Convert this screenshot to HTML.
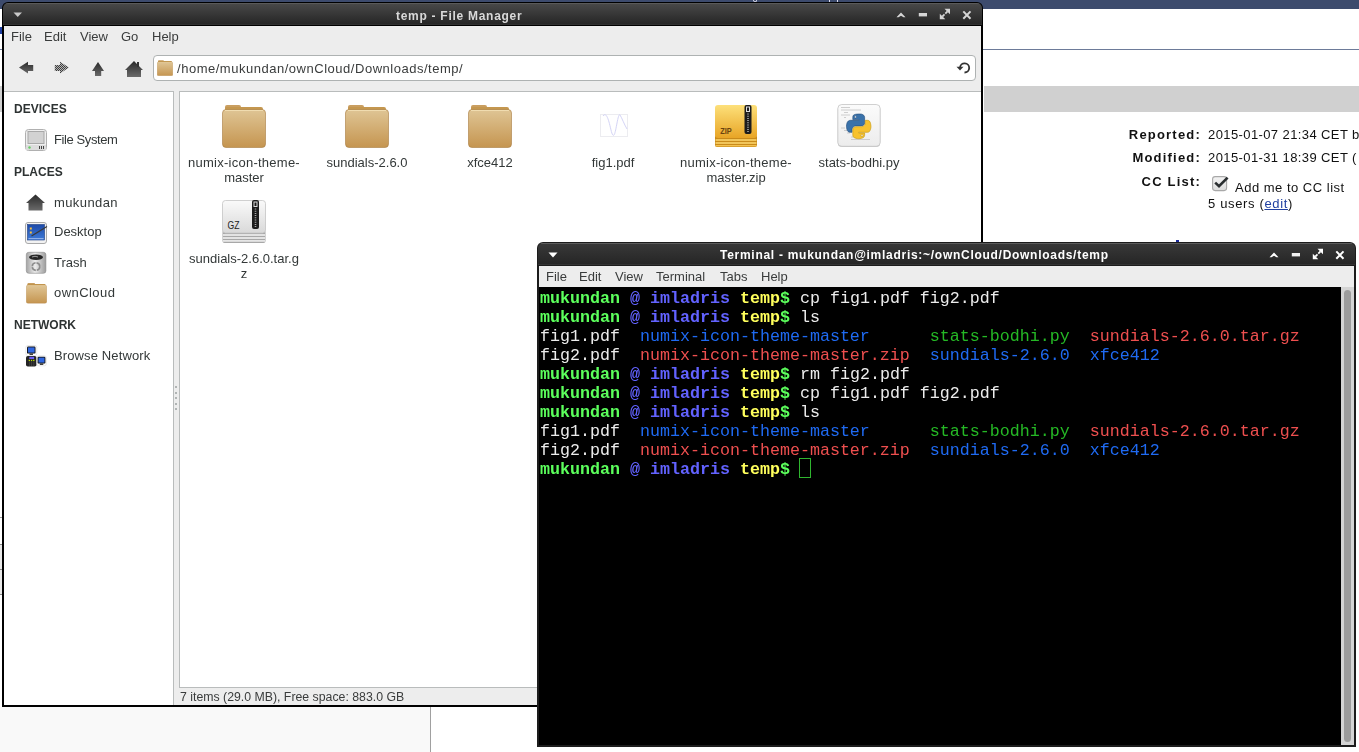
<!DOCTYPE html>
<html><head><meta charset="utf-8">
<style>
*{margin:0;padding:0;box-sizing:border-box}
html,body{width:1359px;height:752px;overflow:hidden;background:#fff;font-family:"Liberation Sans",sans-serif;position:relative}
.a{position:absolute}
.mono{font-family:"Liberation Mono",monospace}
svg.a{overflow:visible}
#topstrip{left:0;top:0;width:1359px;height:9px;background:#3d4b6d}
.bz{font-size:13px;color:#111;white-space:nowrap}
.bzb{font-weight:bold;text-align:right}
/* file manager */
#fm{left:2px;top:2px;width:981px;height:705px;background:#000;border-radius:6px 6px 0 0}
#fmtitle{left:3px;top:3px;width:979px;height:22px;border-radius:5px 5px 0 0;background:linear-gradient(#5a5a5a 0,#5a5a5a 1px,#484848 1px,#262626 21px,#303030 21px)}
.ttl{color:#d9d9d9;font-weight:bold;font-size:12px;white-space:nowrap;letter-spacing:0.72px}
#fmbody{left:4px;top:26px;width:977px;height:679px;background:#ededed}
.menu{font-size:13px;color:#3a3c3c;white-space:nowrap;line-height:15px}
#loc{left:153px;top:55px;width:823px;height:26px;background:#fff;border:1px solid #aeb2b2;border-radius:4px}
#side{left:4px;top:91px;width:170px;height:614px;background:#fff;border-top:1px solid #b9bcbc;border-right:1px solid #b9bcbc}
#view{left:179px;top:91px;width:802px;height:597px;background:#fff;border-top:1px solid #b9bcbc;border-left:1px solid #b9bcbc;border-bottom:1px solid #b9bcbc}
.hd{font-weight:bold;font-size:12px;color:#2e3333;line-height:14px}
.si{font-size:13px;color:#333838;white-space:nowrap;line-height:15px}
.lbl{font-size:13px;color:#333838;text-align:center;line-height:15px;width:130px;white-space:nowrap}
/* terminal */
#term{left:537px;top:242px;width:819px;height:505px;background:#1c1c1c;border-radius:6px 6px 0 0}
#ttitle{left:538px;top:243px;width:817px;height:22px;border-radius:5px 5px 0 0;background:linear-gradient(#5c5c5c 0,#5c5c5c 1px,#383838 1px,#262626 21px,#333 21px)}
#tmenu{left:539px;top:266px;width:815px;height:21px;background:#ededed}
#tscreen{left:539px;top:287px;width:802px;height:458px;background:#000}
#tsb{left:1341px;top:287px;width:13px;height:458px;background:#d4d4d4}
.tl{font-size:16.67px;line-height:19px;white-space:pre;color:#ececec}
.g{color:#5cff5c;font-weight:bold}
.b{color:#6262ff;font-weight:bold}
.y{color:#ffff5c;font-weight:bold}
.db{color:#1f6af2}
.dr{color:#ee4f4f}
.dg{color:#25b825}
.menu,.si,.hd,.lbl,.ttl,.tl,.bz{will-change:transform}
</style></head><body>
<svg width="0" height="0" style="position:absolute">
<defs>
<linearGradient id="fold" x1="0" y1="0" x2="0" y2="1"><stop offset="0" stop-color="#dfc595"/><stop offset="1" stop-color="#c59550"/></linearGradient>
<linearGradient id="zipg" x1="0" y1="0" x2="0" y2="1"><stop offset="0" stop-color="#fde07a"/><stop offset="1" stop-color="#e8a526"/></linearGradient>
<linearGradient id="gzg" x1="0" y1="0" x2="0" y2="1"><stop offset="0" stop-color="#fafafa"/><stop offset="1" stop-color="#d9d9d9"/></linearGradient>
<pattern id="dith" width="2" height="2" patternUnits="userSpaceOnUse"><rect width="2" height="2" fill="#b4b4b4"/><rect width="1" height="1" fill="#3a3a3a"/><rect x="1" y="1" width="1" height="1" fill="#444"/></pattern>
<linearGradient id="tb" x1="0" y1="0" x2="0" y2="1"><stop offset="0" stop-color="#2a2a2a"/><stop offset="1" stop-color="#6a6a6a"/></linearGradient>
<symbol id="folder" viewBox="0 0 44 44">
  <rect x="3" y="1" width="16" height="6" rx="2" fill="#c99e60"/>
  <rect x="3" y="3" width="38" height="8" rx="2" fill="#c4974f"/>
  <rect x="0.5" y="5.5" width="43" height="38" rx="3.5" fill="url(#fold)" stroke="#a97b3f" stroke-width="1" stroke-opacity="0.6"/>
  <line x1="3" y1="6.5" x2="41" y2="6.5" stroke="#f0dcb0" stroke-width="1"/>
</symbol>
</defs>
</svg>

<div class="a" id="topstrip"></div>
<div class="a" style="left:753px;top:0;width:4px;height:2px;border:1px solid #dde;border-top:none;border-radius:0 0 2px 2px"></div>
<div class="a" style="left:829px;top:0;width:1px;height:2px;background:#dde"></div>
<div class="a" style="left:837px;top:0;width:1px;height:2px;background:#dde"></div>
<div class="a" style="left:983px;top:49px;width:376px;height:1px;background:#6d7b99"></div>
<div class="a" style="left:984px;top:86px;width:375px;height:26px;background:#d0d0d0"></div>
<div class="a" style="left:0;top:49px;width:2px;height:1px;background:#6d7b99"></div>
<div class="a" style="left:0;top:27px;width:2px;height:7px;background:#1f3ea0"></div>
<div class="a" style="left:0;top:86px;width:2px;height:26px;background:#d0d0d0"></div>
<div class="a" style="left:0;top:517px;width:2px;height:1px;background:#999"></div>
<div class="a" style="left:0;top:544px;width:2px;height:51px;background:#e8e8e8;border-top:1px solid #888;border-bottom:1px solid #888"></div>
<div class="a" style="left:0;top:569px;width:2px;height:1px;background:#888"></div>
<div class="a" style="left:1176px;top:240px;width:3px;height:2px;background:#1a2a9a"></div>
<div class="a" style="left:0;top:707px;width:430px;height:45px;background:#f9f9f9"></div>
<div class="a" style="left:430px;top:707px;width:1px;height:45px;background:#a0a0a0"></div>
<div class="a bz bzb" style="left:1060px;top:127px;width:141px;letter-spacing:1.2px">Reported:</div>
<div class="a bz bzb" style="left:1060px;top:150px;width:141px;letter-spacing:1.2px">Modified:</div>
<div class="a bz bzb" style="left:1060px;top:174px;width:141px;letter-spacing:1.2px">CC List:</div>
<div class="a bz" style="left:1208px;top:127px;letter-spacing:0.4px">2015-01-07 21:34 CET by</div>
<div class="a bz" style="left:1208px;top:150px;letter-spacing:0.4px">2015-01-31 18:39 CET (</div>
<svg class="a" style="left:1212px;top:176px" width="18" height="16"><defs><linearGradient id="cbg" x1="0" y1="0" x2="0" y2="1"><stop offset="0" stop-color="#f4f4f4"/><stop offset="1" stop-color="#dcdcdc"/></linearGradient></defs><rect x="0.6" y="0.6" width="14" height="14" rx="2.5" fill="url(#cbg)" stroke="#a8a8a8" stroke-width="1.1"/><path d="M3.2 6.6 L7 10.2 L15.6 1.6" fill="none" stroke="#2a2e30" stroke-width="2.6" stroke-linejoin="miter"/></svg>
<div class="a bz" style="left:1235px;top:180px;letter-spacing:0.5px">Add me to CC list</div>
<div class="a bz" style="left:1208px;top:196px;letter-spacing:0.65px">5 users (<span style="color:#1f3fa0;text-decoration:underline">edit</span>)</div>

<!-- File manager -->
<div class="a" id="fm"></div>
<div class="a" id="fmtitle"></div>
<svg class="a" style="left:13px;top:12px" width="10" height="6"><path d="M0.5 0.5 H9 L4.75 5 Z" fill="#c9c9c9"/></svg>
<div class="a ttl" style="left:396px;top:9px">temp - File Manager</div>
<svg class="a" style="left:895px;top:8px" width="80" height="14">
  <path d="M1.5 9.2 L6 4.6 L10.5 9.2 H8.5 L6 7.8 L3.5 9.2 Z" fill="#d6d6d6"/>
  <rect x="23.8" y="5" width="8.2" height="3.4" fill="#d6d6d6"/>
  <path d="M49.5 0.7 H55 V6.2 Z M44.8 11.2 V5.7 L50.3 11.2 Z" fill="#d6d6d6"/>
  <path d="M52.5 3.4 L50.3 5.6 M47.3 8.6 L49.5 6.4" stroke="#d6d6d6" stroke-width="1.8"/>
  <path d="M68.3 3.4 L75.5 10.8 M75.5 3.4 L68.3 10.8" stroke="#d6d6d6" stroke-width="2"/>
</svg>
<div class="a" id="fmbody"></div>
<div class="a menu" style="left:11px;top:29px">File</div>
<div class="a menu" style="left:44px;top:29px">Edit</div>
<div class="a menu" style="left:80px;top:29px">View</div>
<div class="a menu" style="left:121px;top:29px">Go</div>
<div class="a menu" style="left:152px;top:29px">Help</div>
<!-- toolbar icons -->
<svg class="a" style="left:0;top:0" width="160" height="90">
  <path d="M19 67.6 L28 61.8 V65 H33.2 V71 H28 V73.6 Z" fill="url(#tb)"/>
  <path d="M69 67.6 L60 61.8 V65 H54.8 V71 H60 V73.6 Z" fill="url(#dith)"/>
  <path d="M98 62 L104 71 H101.2 V76 H95 V71 H92 Z" fill="url(#tb)"/>
  <path d="M134 61 L143 70 H141 V77 H127 V70 H125 Z" fill="url(#tb)"/>
  <rect x="137" y="62" width="2" height="5" fill="#333"/>
</svg>
<div class="a" id="loc"></div>
<svg class="a" style="left:157px;top:60px" width="16" height="16"><use href="#folder" width="16" height="16"/></svg>
<div class="a menu" style="left:177px;top:61px;letter-spacing:0.52px">/home/mukundan/ownCloud/Downloads/temp/</div>
<svg class="a" style="left:955px;top:59.6px" width="16" height="16">
  <path d="M5 7.5 A4.6 4.6 0 1 1 9.5 12.5" fill="none" stroke="#333" stroke-width="1.8"/>
  <path d="M1.5 6.8 L8.5 6.8 L5 10.5 Z" fill="#333"/>
</svg>
<div class="a" id="side"></div>
<div class="a" id="view"></div>
<div class="a" style="left:175px;top:386px;width:2px;height:26px;background:repeating-linear-gradient(#b0b4b4 0 2px,transparent 2px 5.5px)"></div>
<div class="a hd" style="left:14px;top:102px">DEVICES</div>
<svg class="a" style="left:25px;top:129px" width="22" height="22">
  <rect x="0.5" y="0.5" width="21" height="21" rx="3" fill="#efefef" stroke="#b0b0b0"/>
  <rect x="3" y="2.5" width="16" height="12" fill="#d2d2d2" stroke="#a8a8a8"/>
  <rect x="1" y="16" width="20" height="5" fill="#dcdcdc"/>
  <circle cx="4.5" cy="18.5" r="1.2" fill="#6c6"/>
  <rect x="14" y="17" width="1" height="3" fill="#444"/><rect x="16" y="17" width="1" height="3" fill="#444"/><rect x="18" y="17" width="1" height="3" fill="#444"/>
</svg>
<div class="a si" style="left:54px;top:132px;letter-spacing:-0.4px">File System</div>
<div class="a hd" style="left:14px;top:165px">PLACES</div>
<svg class="a" style="left:26px;top:194px" width="20" height="17">
  <path d="M9.5 0.5 L19 9 H16.5 V16.5 H2.5 V9 H0 Z" fill="url(#tb)"/>
</svg>
<div class="a si" style="left:54px;top:195px;letter-spacing:0.4px">mukundan</div>
<svg class="a" style="left:25px;top:222px" width="22" height="22">
  <defs><linearGradient id="dsk" x1="0" y1="0" x2="0" y2="1"><stop offset="0" stop-color="#1d4aa8"/><stop offset="1" stop-color="#3d7ad8"/></linearGradient></defs>
  <rect x="0.5" y="0.5" width="21" height="21" rx="2.5" fill="#f2f2f2" stroke="#a9a9a9"/>
  <rect x="2.5" y="2.5" width="17" height="15.5" fill="url(#dsk)" stroke="#1a3b80" stroke-width="0.6"/>
  <rect x="3.5" y="16" width="15" height="1.2" fill="#8fb0e8"/>
  <rect x="4.8" y="5.5" width="2" height="2" fill="#f6c040"/><rect x="4.8" y="9.5" width="2" height="2" fill="#f6c040"/>
  <path d="M6.5 14 L22 4.5" stroke="#3a3a3a" stroke-width="1.3"/>
</svg>
<div class="a si" style="left:54px;top:224px">Desktop</div>
<svg class="a" style="left:26px;top:252px" width="21" height="22">
  <defs><linearGradient id="trg" x1="0" y1="0" x2="1" y2="0"><stop offset="0" stop-color="#a4a4a4"/><stop offset="0.45" stop-color="#ececec"/><stop offset="1" stop-color="#9c9c9c"/></linearGradient></defs>
  <rect x="0.3" y="0.3" width="19.6" height="21" rx="2.5" fill="url(#trg)" stroke="#8a8a8a" stroke-width="0.6"/>
  <ellipse cx="10" cy="5.3" rx="7" ry="2.8" fill="#262626"/>
  <path d="M6 5 Q9 3.5 12 5" stroke="#bbb" stroke-width="0.8" fill="none"/>
  <circle cx="10" cy="14.6" r="3.8" fill="none" stroke="#8c8c8c" stroke-width="1.6" stroke-dasharray="5 1"/>
</svg>
<div class="a si" style="left:54px;top:255px">Trash</div>
<svg class="a" style="left:26px;top:282px" width="21" height="22"><use href="#folder" width="21" height="22"/></svg>
<div class="a si" style="left:54px;top:285px;letter-spacing:0.45px">ownCloud</div>
<div class="a hd" style="left:14px;top:318px">NETWORK</div>
<svg class="a" style="left:25px;top:345px" width="22" height="22">
  <rect x="0.8" y="0.5" width="11" height="10" rx="2" fill="#fff" stroke="#d8d8d8" stroke-width="0.6"/>
  <rect x="2" y="1.6" width="8.5" height="7" rx="1.2" fill="#111"/>
  <rect x="2.9" y="2.4" width="6.7" height="5.2" fill="#2f66e0"/>
  <rect x="4.5" y="8.6" width="3.5" height="1.2" fill="#111"/>
  <rect x="1" y="11" width="10.5" height="10.5" rx="1.8" fill="#242424"/>
  <rect x="4.3" y="11.8" width="4.8" height="2.2" fill="#6a5cf4"/>
  <rect x="3.7" y="14.8" width="1.3" height="1.3" fill="#bde000"/><rect x="5.9" y="14.8" width="1.3" height="1.3" fill="#bde000"/><rect x="8.1" y="14.8" width="1.3" height="1.3" fill="#bde000"/>
  <path d="M4.4 16.5 V21 M6.6 16.5 V21 M8.8 16.5 V21" stroke="#444" stroke-width="0.8"/>
  <rect x="11.8" y="10.8" width="9.5" height="10" rx="2" fill="#fff" stroke="#d8d8d8" stroke-width="0.6"/>
  <rect x="12.6" y="11.8" width="7.8" height="6.8" rx="1.2" fill="#111"/>
  <rect x="13.5" y="12.6" width="6" height="5" fill="#2f66e0"/>
  <rect x="14.8" y="18.6" width="3.5" height="1.2" fill="#111"/>
</svg>
<div class="a si" style="left:54px;top:348px;letter-spacing:0.12px">Browse Network</div>
<div class="a menu" style="left:180px;top:690px;font-size:12.3px">7 items (29.0 MB), Free space: 883.0 GB</div>

<!-- icons -->
<svg class="a" style="left:222px;top:104px" width="44" height="44"><use href="#folder" width="44" height="44"/></svg>
<svg class="a" style="left:345px;top:104px" width="44" height="44"><use href="#folder" width="44" height="44"/></svg>
<svg class="a" style="left:468px;top:104px" width="44" height="44"><use href="#folder" width="44" height="44"/></svg>
<svg class="a" style="left:600px;top:114px" width="28" height="23">
  <rect x="0.5" y="0.5" width="27" height="22" fill="#fff" stroke="#ececf0"/>
  <path d="M3 2 C5 -1 7 1 9 8 S12 23 14 21 S18 -2 20 1 S24 10 27 15" fill="none" stroke="#d4d4f6" stroke-width="1"/>
</svg>
<svg class="a" style="left:715px;top:105px" width="43" height="43">
  <rect x="0" y="30" width="42" height="12" rx="2" fill="#c98a1a"/>
  <rect x="0.5" y="34.2" width="41" height="1.6" fill="#fbd46a"/>
  <rect x="0.5" y="37.2" width="41" height="1.6" fill="#fbd46a"/>
  <rect x="0.5" y="40" width="41" height="1.4" fill="#f4c250"/>
  <rect x="0" y="0" width="42" height="33" rx="3" fill="url(#zipg)"/>
  <rect x="29.5" y="0" width="7" height="29" rx="2" fill="#1c1c1c"/>
  <rect x="31.5" y="2" width="3" height="4.5" fill="none" stroke="#ddd" stroke-width="1"/>
  <path d="M33 8.5 V27" stroke="#aaa" stroke-width="1.6" stroke-dasharray="1 1.2"/>
  <text x="5.2" y="28.7" font-family="Liberation Sans" font-size="9.6" font-weight="bold" fill="#6a4310" textLength="11.5" lengthAdjust="spacingAndGlyphs">ZIP</text>
</svg>
<svg class="a" style="left:837px;top:104px" width="44" height="44">
  <defs><linearGradient id="pyb" x1="0" y1="0" x2="0" y2="1"><stop offset="0" stop-color="#fbfbfb"/><stop offset="1" stop-color="#ececec"/></linearGradient></defs>
  <rect x="0.8" y="1" width="42.4" height="42" rx="4" fill="#9a9a9a" opacity="0.5"/>
  <rect x="0.8" y="0.5" width="42.4" height="41.8" rx="4" fill="url(#pyb)" stroke="#c4c4c4" stroke-width="0.8"/>
  <g stroke="#c8c8c8" stroke-width="0.9">
    <path d="M4 3.5 H13 M4 6 H24 M7 8.5 H11 M4 11 H13 M7 13.5 H9 M4 24 H8 M7 26.5 H10 M10 29 H13 M14 33 H27 M14 35.5 H33"/>
  </g>
  <g transform="translate(9.5,10) scale(0.22)">
    <path d="M54.9 0.1c-4.6 0-9 .4-12.8 1.1-11.3 2-13.4 6.2-13.4 13.9v10.2h26.8v3.4H18.6c-7.8 0-14.6 4.7-16.7 13.6-2.5 10.2-2.6 16.6 0 27.2 1.9 7.9 6.4 13.6 14.2 13.6h9.2V70.8c0-8.9 7.7-16.7 16.8-16.7h26.8c7.5 0 13.4-6.1 13.4-13.6V15.1c0-7.2-6.1-12.7-13.4-13.9C70.3.4 65.5.1 54.9.1zM40.4 8.3c2.8 0 5 2.3 5 5.1 0 2.8-2.3 5-5 5-2.8 0-5-2.3-5-5 0-2.8 2.2-5.1 5-5.1z" fill="#3a72aa" stroke="#24507e" stroke-width="3"/>
    <path d="M85.6 28.7v11.9c0 9.2-7.8 17-16.8 17H42.1c-7.3 0-13.4 6.3-13.4 13.6v25.5c0 7.2 6.3 11.5 13.4 13.6 8.5 2.5 16.6 2.9 26.8 0 6.8-2 13.4-5.9 13.4-13.6V86.5H55.5v-3.4h40.2c7.8 0 10.7-5.4 13.4-13.6 2.8-8.4 2.7-16.5 0-27.2-1.9-7.7-5.6-13.6-13.4-13.6H85.6zM70.5 93.3c2.8 0 5 2.3 5 5 0 2.8-2.3 5.1-5 5.1-2.8 0-5-2.3-5-5.1 0-2.8 2.3-5 5-5z" fill="#f7c22e" stroke="#c89a10" stroke-width="3"/>
  </g>
</svg>
<svg class="a" style="left:222px;top:200px" width="44" height="44">
  <rect x="0.5" y="30" width="43" height="13" rx="2" fill="#a8a8a8"/>
  <rect x="1" y="34.2" width="42" height="1.6" fill="#f2f2f2"/>
  <rect x="1" y="37.2" width="42" height="1.6" fill="#f2f2f2"/>
  <rect x="1" y="40" width="42" height="1.8" fill="#e6e6e6"/>
  <rect x="0.5" y="0.5" width="43" height="32.5" rx="3" fill="url(#gzg)" stroke="#c4c4c4" stroke-width="0.8"/>
  <rect x="30" y="0" width="7" height="29" rx="2" fill="#1c1c1c"/>
  <rect x="32" y="2" width="3" height="4.5" fill="none" stroke="#ddd" stroke-width="1"/>
  <path d="M33.5 8.5 V27" stroke="#aaa" stroke-width="1.6" stroke-dasharray="1 1.2"/>
  <text x="5.5" y="29" font-family="Liberation Sans" font-size="10.5" fill="#222" textLength="12" lengthAdjust="spacingAndGlyphs">GZ</text>
</svg>
<div class="a lbl" style="left:179px;top:155px"><span style="letter-spacing:0.25px">numix-icon-theme-</span><br>master</div>
<div class="a lbl" style="left:302px;top:155px">sundials-2.6.0</div>
<div class="a lbl" style="left:425px;top:155px">xfce412</div>
<div class="a lbl" style="left:548px;top:155px">fig1.pdf</div>
<div class="a lbl" style="left:671px;top:155px"><span style="letter-spacing:0.25px">numix-icon-theme-</span><br>master.zip</div>
<div class="a lbl" style="left:794px;top:155px">stats-bodhi.py</div>
<div class="a lbl" style="left:179px;top:251px">sundials-2.6.0.tar.g<br>z</div>

<!-- Terminal -->
<div class="a" id="term"></div>
<div class="a" id="ttitle"></div>
<svg class="a" style="left:548px;top:252px" width="10" height="6"><path d="M0.5 0.5 H9.5 L5 5.5 Z" fill="#fff"/></svg>
<div class="a ttl" style="left:720px;top:248px;color:#fff">Terminal - mukundan@imladris:~/ownCloud/Downloads/temp</div>
<svg class="a" style="left:1268px;top:248px" width="80" height="14">
  <path d="M1.5 9.2 L6 4.6 L10.5 9.2 H8.5 L6 7.8 L3.5 9.2 Z" fill="#fff"/>
  <rect x="23.8" y="5" width="8.2" height="3.4" fill="#f0f0f0"/>
  <path d="M49.5 0.7 H55 V6.2 Z M44.8 11.2 V5.7 L50.3 11.2 Z" fill="#fff"/>
  <path d="M52.5 3.4 L50.3 5.6 M47.3 8.6 L49.5 6.4" stroke="#fff" stroke-width="1.8"/>
  <path d="M68.3 3.4 L75.5 10.8 M75.5 3.4 L68.3 10.8" stroke="#fff" stroke-width="2"/>
</svg>
<div class="a" id="tmenu"></div>
<div class="a menu" style="left:546px;top:269px">File</div>
<div class="a menu" style="left:579px;top:269px">Edit</div>
<div class="a menu" style="left:615px;top:269px">View</div>
<div class="a menu" style="left:656px;top:269px">Terminal</div>
<div class="a menu" style="left:720px;top:269px">Tabs</div>
<div class="a menu" style="left:761px;top:269px">Help</div>
<div class="a" id="tscreen"></div>
<div class="a" id="tsb"></div>
<div class="a" style="left:1344px;top:290px;width:7px;height:452px;background:#9c9c9c;border-radius:3.5px"></div>
<div class="a mono tl" style="left:540px;top:289px"><span class="g">mukundan</span> <span class="b">@ imladris</span> <span class="y">temp</span><span class="g">$</span> cp fig1.pdf fig2.pdf
<span class="g">mukundan</span> <span class="b">@ imladris</span> <span class="y">temp</span><span class="g">$</span> ls
fig1.pdf  <span class="db">numix-icon-theme-master</span>      <span class="dg">stats-bodhi.py</span>  <span class="dr">sundials-2.6.0.tar.gz</span>
fig2.pdf  <span class="dr">numix-icon-theme-master.zip</span>  <span class="db">sundials-2.6.0</span>  <span class="db">xfce412</span>
<span class="g">mukundan</span> <span class="b">@ imladris</span> <span class="y">temp</span><span class="g">$</span> rm fig2.pdf
<span class="g">mukundan</span> <span class="b">@ imladris</span> <span class="y">temp</span><span class="g">$</span> cp fig1.pdf fig2.pdf
<span class="g">mukundan</span> <span class="b">@ imladris</span> <span class="y">temp</span><span class="g">$</span> ls
fig1.pdf  <span class="db">numix-icon-theme-master</span>      <span class="dg">stats-bodhi.py</span>  <span class="dr">sundials-2.6.0.tar.gz</span>
fig2.pdf  <span class="dr">numix-icon-theme-master.zip</span>  <span class="db">sundials-2.6.0</span>  <span class="db">xfce412</span>
<span class="g">mukundan</span> <span class="b">@ imladris</span> <span class="y">temp</span><span class="g">$</span> </div>
<div class="a" style="left:799px;top:458px;width:12px;height:20px;border:1px solid #2fb52f"></div>
</body></html>
